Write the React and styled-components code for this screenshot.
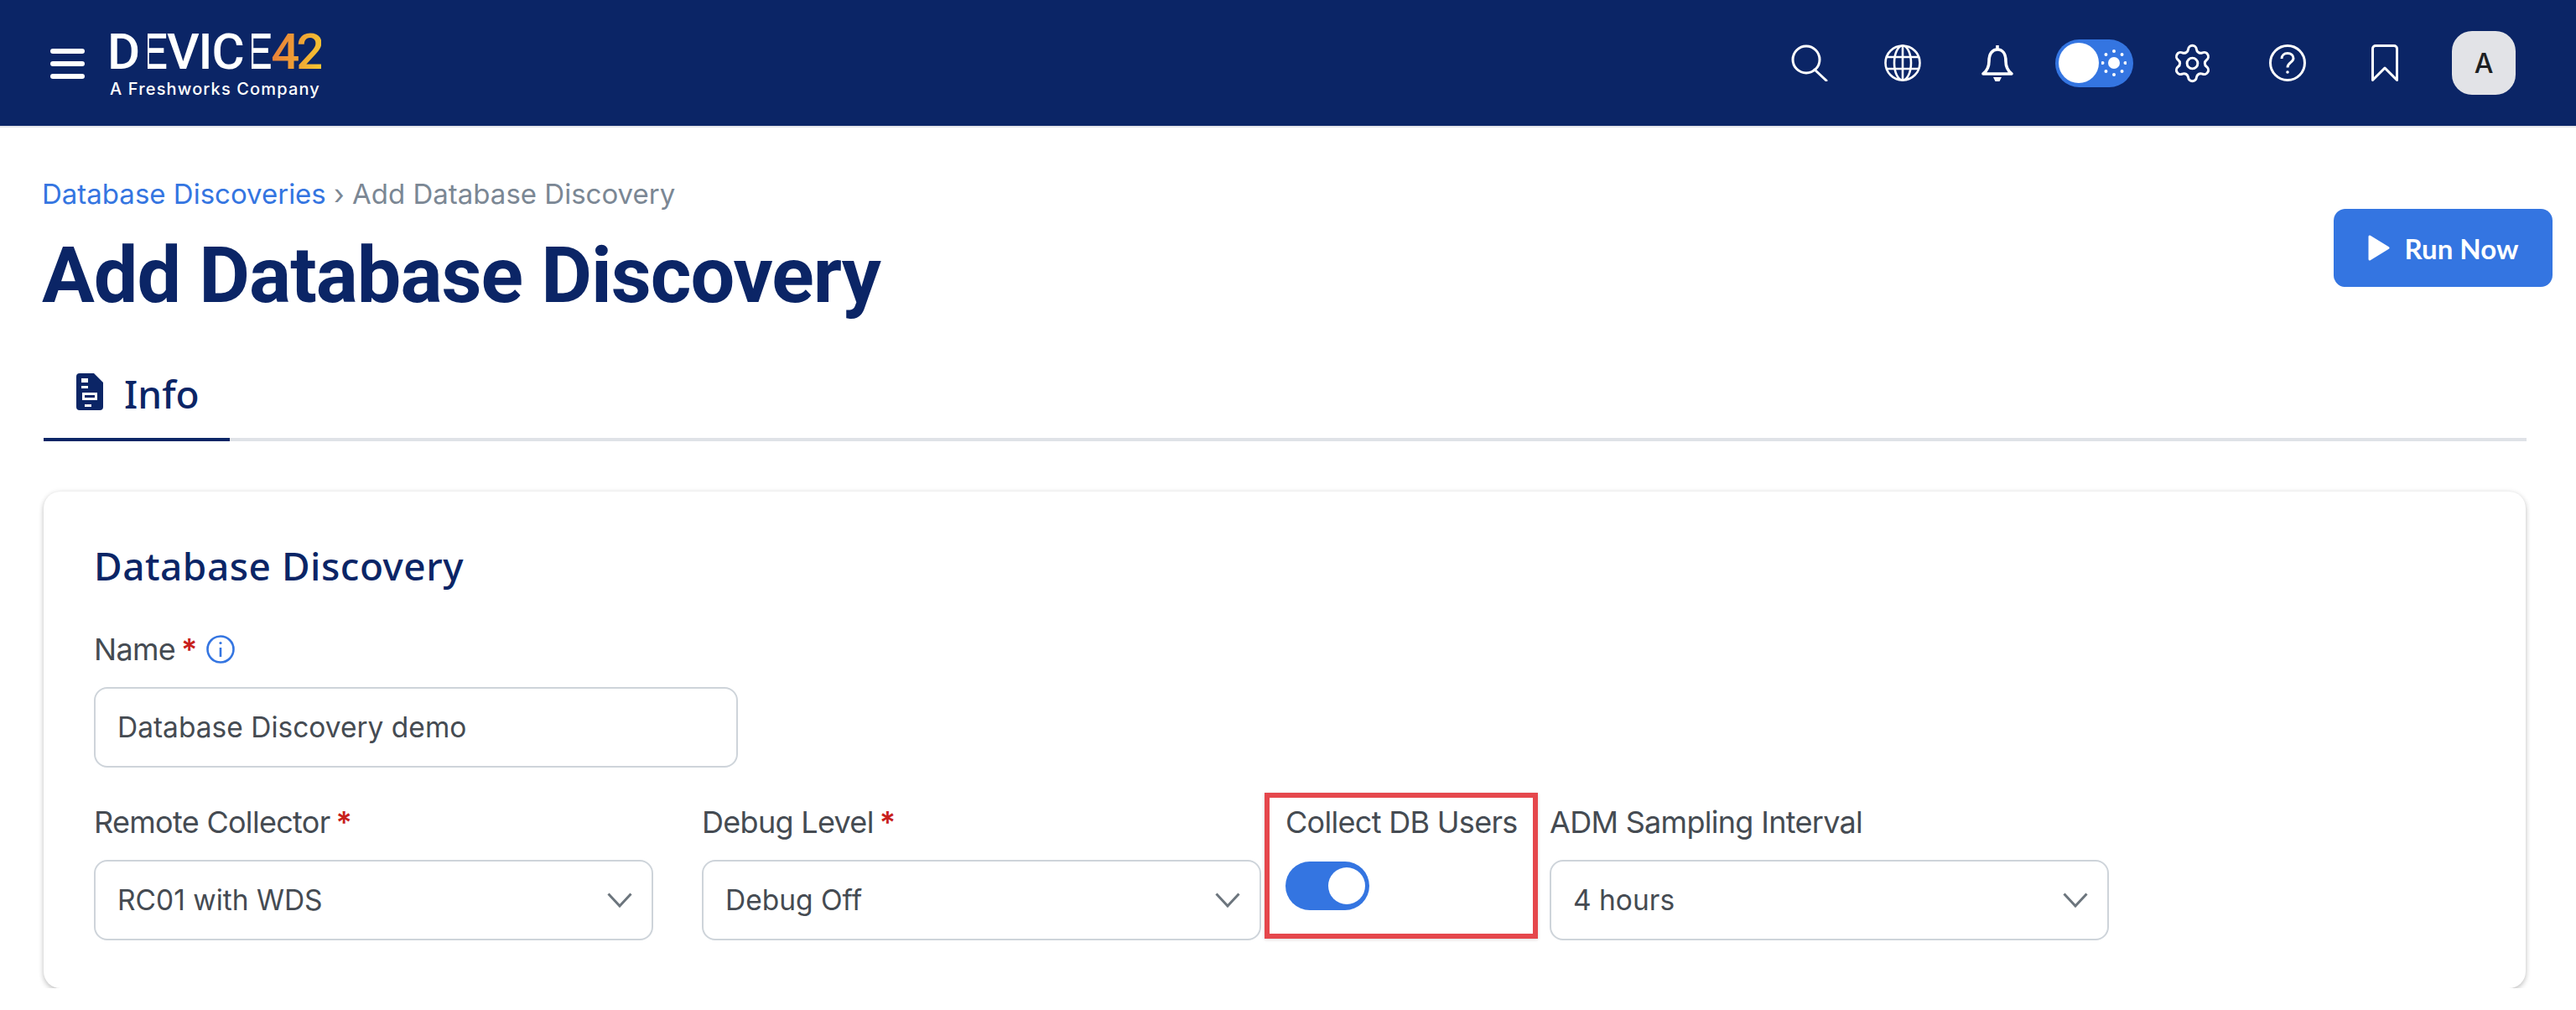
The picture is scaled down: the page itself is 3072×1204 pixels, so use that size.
import React from "react";
import styled, { createGlobalStyle } from "styled-components";
import { Settings } from "lucide-react";

const Global = createGlobalStyle`
  html, body { margin: 0; padding: 0; background: #fff; }
  body { font-family: Inter, "Liberation Sans", sans-serif; color: #454b52; }
  * { box-sizing: border-box; }
`;
const Navy = "#0b2566";
const Blue = "#3475e1";

const Header = styled.header`
  height: 152px; background: ${Navy}; border-bottom: 2px solid #e2e4e9;
  display: flex; align-items: center; justify-content: space-between;
  padding: 0 72px 0 60px;
`;
const HeaderLeft = styled.div`display: flex; align-items: center; gap: 27px;`;
const Burger = styled.button`
  width: 41px; height: 36px; padding: 0; border: 0; background: none;
  display: flex; flex-direction: column; justify-content: space-between;
  margin-top: 2px;
  span { display: block; height: 6px; border-radius: 3px; background: #fff; }
`;
const Logo = styled.div`display: flex; flex-direction: column; width: 256px; margin-top: 6px;`;
const LogoMark = styled.div`
  height: 52px; display: flex; align-items: center; margin-top: -2px;
  font: 500 60px/52px Roboto, sans-serif; color: #fff; letter-spacing: -1.1px; white-space: nowrap;
`;
const LogoE = styled.span`
  position: relative; display: inline-block;
  &::before { content: ""; position: absolute; left: 0; top: 0; bottom: 0; width: 10px; background: ${Navy}; }
`;
const LogoNum = styled.span`
  font-weight: 500; letter-spacing: -4px;
  background: linear-gradient(100deg, #e8793a 0%, #ef9f35 50%, #f5c832 100%);
  -webkit-background-clip: text; background-clip: text; color: transparent;
`;
const LogoSub = styled.div`
  font: 500 20px/24px Inter, sans-serif; color: #fff; letter-spacing: 1.15px; white-space: nowrap; margin-top: 6px; padding-left: 3px;
`;
const HeaderRight = styled.div`display: flex; align-items: center;`;
const NavIcon = styled.span`
  display: flex; align-items: center; justify-content: center; width: ${p => p.$w}px; margin-right: ${p => p.$mr}px; color: #fff;
  svg { flex: none; }
`;
const ThemeToggle = styled.div`
  width: 93px; height: 57px; border-radius: 29px; background: ${Blue}; padding: 4px;
  display: flex; align-items: center; gap: 3px; margin-right: 49px;
`;
const ThemeKnob = styled.span`width: 48px; height: 48px; border-radius: 50%; background: #fff; flex: none;`;
const Avatar = styled.div`
  width: 76px; height: 76px; border-radius: 24px; background: #e2e3e7; color: #1d1f22;
  display: flex; align-items: center; justify-content: center;
  font: 500 32px Inter, sans-serif;
`;

const Main = styled.main`padding: 59px 28px 0 50px;`;
const TitleRow = styled.div`display: flex; justify-content: space-between; align-items: flex-start;`;
const Crumbs = styled.nav`font: 400 33px/40px Inter, sans-serif; color: #7b8794;`;
const CrumbLink = styled.a`color: ${Blue};`;
const Title = styled.h1`
  margin: 23px 0 0; font: 700 93.500px/108px Roboto, sans-serif; color: ${Navy}; letter-spacing: -1px;
`;
const RunButton = styled.button`
  width: 261px; height: 93px; margin-top: 38px; border: 0; border-radius: 14px; background: ${Blue}; color: #fff;
  display: flex; align-items: center; justify-content: center; gap: 18px;
  font: 700 33px Lato, sans-serif;
`;
const Tabs = styled.div`margin: 36px 31px 0 2px; border-bottom: 4px solid #dfe2e7; height: 108px; display: flex;`;
const Tab = styled.div`
  width: 222px; height: 108px; border-bottom: 4px solid ${Navy};
  display: flex; align-items: flex-start; gap: 25px; padding: 27px 0 0 39px;
  font: 500 46px/48px "Noto Sans", sans-serif; color: ${Navy};
`;
const Card = styled.section`
  margin: 60px 32px 0 2px; height: 592px; border-radius: 20px; background: #fff;
  box-shadow: 0 3px 6px rgba(0,0,0,.2), 0 0 6px rgba(0,0,0,.08);
  padding: 60px 60px 0;
`;
const CardTitle = styled.h2`margin: 0; font: 500 46px/56px "Noto Sans", sans-serif; color: ${Navy}; letter-spacing: .5px;`;
const Label = styled.label`
  display: flex; align-items: center; gap: 7px; height: 44px;
  font: 400 36px/44px Inter, sans-serif; letter-spacing: -0.7px; color: #454b52; white-space: nowrap;
`;
const Star = styled.span`color: #c8201c; font-weight: 600;`;
const Field = styled.div`width: ${p => p.$w}px; margin-top: ${p => p.$mt || 0}px;`;
const Input = styled.div`
  height: 96px; margin-top: 23px; border: 2px solid #ced4da; border-radius: 16px; padding: 0 23px 0 26px;
  display: flex; align-items: center; justify-content: space-between;
  font: 400 33.500px Inter, sans-serif; color: #454b52;
`;
const SelectRow = styled.div`display: flex; margin-top: 43px;`;
const SelectField = styled(Field)`margin-right: ${p => p.$mr}px;`;
const Highlight = styled.div`
  width: 326px; height: 174px; margin: -13px 14px 0 4px; border: 6px solid #e5474c; padding: 7px 0 0 19px;
  box-shadow: 0 1px 4px rgba(0,0,0,.15);
`;
const Switch = styled.div`
  width: 100px; height: 58px; margin-top: 25px; border-radius: 29px; background: ${Blue};
  display: flex; justify-content: flex-end; align-items: center; padding-right: 5px;
`;
const SwitchKnob = styled.span`width: 44px; height: 44px; border-radius: 50%; background: #fff;`;

const Chevron = () => (
  <svg width="30" height="18" viewBox="0 0 30 18" fill="none" stroke="#6c757d" strokeWidth="3"><path d="M1.5 1.5 15 16 28.5 1.5" /></svg>
);
const W = { fill: "none", stroke: "#fff", strokeWidth: 3 };

const SearchIcon = () => (
  <svg width="44" height="44" viewBox="0 0 44 44" {...W}><circle cx="18" cy="18" r="16" /><path d="M28 30l14 13" strokeLinecap="round" /></svg>
);
const GlobeIcon = () => (
  <svg width="44" height="44" viewBox="0 0 44 44" {...W} strokeWidth="2.6"><circle cx="22" cy="22" r="20.5" /><ellipse cx="22" cy="22" rx="10" ry="20.5" /><path d="M22 1.5v41M2.5 15h39M2.5 29h39" /></svg>
);
const BellIcon = () => (
  <svg width="40" height="44" viewBox="0 0 40 44" {...W} strokeWidth="3.6"><path d="M20 1v5M10 20c0-9 4-14 10-14s10 5 10 14c0 7 2 11 7 15H3c5-4 7-8 7-15z" strokeLinejoin="round" /><path d="M15 39h10l-2.500 5h-5z" fill="#fff" stroke="none" /></svg>
);
const HelpIcon = () => (
  <svg width="44" height="44" viewBox="0 0 44 44" {...W}><circle cx="22" cy="22" r="20.5" /><path d="M15 17c0-4 3-6.500 7-6.500s7 2.500 7 6c0 5-7 5-7 11" /><circle cx="22" cy="33" r="1.800" fill="#fff" stroke="none" /></svg>
);
const BookmarkIcon = () => (
  <svg width="32" height="44" viewBox="0 0 32 44" {...W}><path d="M1.500 42.500V5a3.500 3.500 0 0 1 3.500-3.500h22A3.500 3.500 0 0 1 30.500 5v37.500L16 28z" strokeLinejoin="round" /></svg>
);
const SunIcon = () => (
  <svg width="30" height="36" viewBox="0 0 30 36" fill="#fff">
    <circle cx="15" cy="18" r="7" />
    {[0, 45, 90, 135, 180, 225, 270, 315].map(a => (
      <circle key={a} cx={15 + 13.5 * Math.cos(a * Math.PI / 180)} cy={18 + 14 * Math.sin(a * Math.PI / 180)} r="2" />
    ))}
  </svg>
);
const PlayIcon = () => (
  <svg width="26" height="31" viewBox="0 0 26 31" fill="#fff" stroke="#fff" strokeWidth="3" strokeLinejoin="round"><path d="M2 2v27l22-13.500z" /></svg>
);
const DocIcon = () => (
  <svg width="32" height="44" viewBox="0 0 32 44" style={{ flex: "none" }}>
    <path d="M4 0h17l11 11v29a4 4 0 0 1-4 4H4a4 4 0 0 1-4-4V4a4 4 0 0 1 4-4z" fill={Navy} />
    <path d="M6 6h8v5H6zM6 15h8v3H6zM7 23h18v9H7zM10 37h8v3h-8z" fill="#fff" />
    <path d="M10 26h12v3H10z" fill={Navy} />
  </svg>
);
const InfoIcon = () => (
  <svg width="34" height="34" viewBox="0 0 34 34" fill="none" stroke={Blue} strokeWidth="2.600" style={{ marginLeft: 4 }}><circle cx="17" cy="17" r="15.500" /><path d="M17 15v11" /><circle cx="17" cy="9.500" r="1.600" fill={Blue} stroke="none" /></svg>
);

export default function App() {
  return (
    <>
      <Global />
      <Header>
        <HeaderLeft>
          <Burger aria-label="menu"><span /><span /><span /></Burger>
          <Logo>
            <LogoMark>D<LogoE>E</LogoE>VIC<LogoE>E</LogoE><LogoNum>42</LogoNum></LogoMark>
            <LogoSub>A Freshworks Company</LogoSub>
          </Logo>
        </HeaderLeft>
        <HeaderRight>
          <NavIcon $w={44} $mr={67}><SearchIcon /></NavIcon>
          <NavIcon $w={44} $mr={71}><GlobeIcon /></NavIcon>
          <NavIcon $w={40} $mr={49}><BellIcon /></NavIcon>
          <ThemeToggle><ThemeKnob /><SunIcon /></ThemeToggle>
          <NavIcon $w={42} $mr={71}><Settings size={51} strokeWidth={1.4} /></NavIcon>
          <NavIcon $w={44} $mr={78}><HelpIcon /></NavIcon>
          <NavIcon $w={32} $mr={64}><BookmarkIcon /></NavIcon>
          <Avatar>A</Avatar>
        </HeaderRight>
      </Header>
      <Main>
        <TitleRow>
          <div>
            <Crumbs><CrumbLink>Database Discoveries</CrumbLink> › Add Database Discovery</Crumbs>
            <Title>Add Database Discovery</Title>
          </div>
          <RunButton><PlayIcon />Run Now</RunButton>
        </TitleRow>
        <Tabs>
          <Tab><DocIcon />Info</Tab>
        </Tabs>
        <Card>
          <CardTitle>Database Discovery</CardTitle>
          <Field $w={768} $mt={50}>
            <Label>Name <Star>*</Star><InfoIcon /></Label>
            <Input>Database Discovery demo</Input>
          </Field>
          <SelectRow>
            <SelectField $w={667} $mr={58}>
              <Label>Remote Collector <Star>*</Star></Label>
              <Input>RC01 with WDS<Chevron /></Input>
            </SelectField>
            <SelectField $w={667} $mr={0}>
              <Label>Debug Level <Star>*</Star></Label>
              <Input>Debug Off<Chevron /></Input>
            </SelectField>
            <Highlight>
              <Label>Collect DB Users</Label>
              <Switch><SwitchKnob /></Switch>
            </Highlight>
            <SelectField $w={667} $mr={0}>
              <Label>ADM Sampling Interval</Label>
              <Input>4 hours<Chevron /></Input>
            </SelectField>
          </SelectRow>
        </Card>
      </Main>
    </>
  );
}
